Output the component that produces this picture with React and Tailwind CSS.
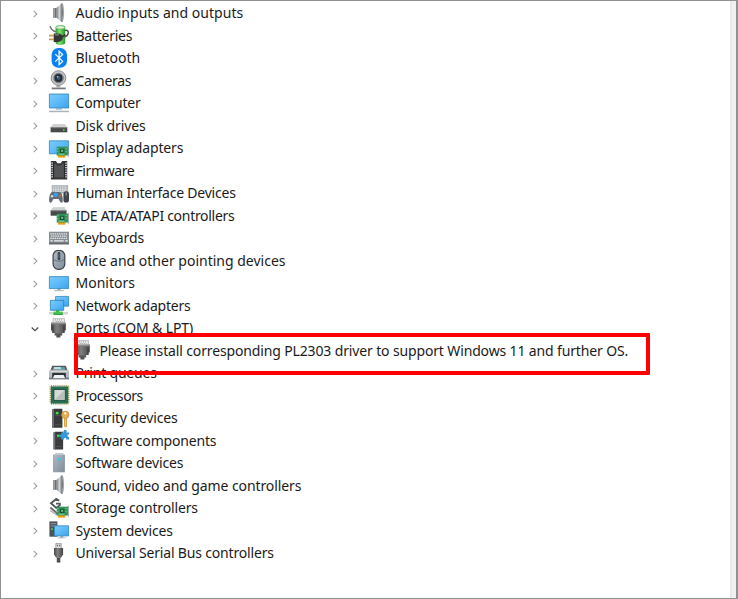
import React from "react";

const Defs = () => (
  <svg className="absolute h-0 w-0" aria-hidden="true">
    <defs>
      <linearGradient id="screen" x1="0" y1="0" x2="1" y2="1">
        <stop offset="0" stopColor="#7ccbfb" />
        <stop offset="0.5" stopColor="#5dbaf8" />
        <stop offset="1" stopColor="#3aa3ee" />
      </linearGradient>
      <linearGradient id="metal" x1="0" y1="0" x2="1" y2="0">
        <stop offset="0" stopColor="#6d7174" />
        <stop offset="0.55" stopColor="#d5d8da" />
        <stop offset="1" stopColor="#85898c" />
      </linearGradient>
      <linearGradient id="dark" x1="0" y1="0" x2="1" y2="0">
        <stop offset="0" stopColor="#4a4a4a" />
        <stop offset="0.4" stopColor="#808080" />
        <stop offset="1" stopColor="#444" />
      </linearGradient>
      <linearGradient id="steel" x1="0" y1="0" x2="1" y2="1">
        <stop offset="0" stopColor="#b3bdc6" />
        <stop offset="1" stopColor="#7f8c99" />
      </linearGradient>
      <linearGradient id="grass" x1="0" y1="0" x2="1" y2="0">
        <stop offset="0" stopColor="#2b9b34" />
        <stop offset="0.4" stopColor="#86e36f" />
        <stop offset="1" stopColor="#27922f" />
      </linearGradient>
    </defs>
  </svg>
);

const Card = () => (
  <g>
    <path d="M10 17h7.5v2.6H10z" fill="#f5a81c" />
    <path d="M11.8 17v2.6M13.7 17v2.6M15.6 17v2.6" stroke="#d9860c" strokeWidth=".5" />
    <path d="M8.7 8.7h11.3v8.8H8.7z" fill="#2f9457" />
    <path d="M12 10.8h4.4v4.2H12z" fill="#155331" />
    <path d="M13 11.8h2.2v2H13z" fill="#6fb98b" />
    <path d="M9.8 10v1.3M9.8 13v1.3M18 10v1.2M18 13v1.2M10.5 16.2h6" stroke="#a8dfb4" strokeWidth=".8" />
    <path d="M20.3 7.8v11" stroke="#8b9690" strokeWidth=".9" />
  </g>
);

const Speaker = () => (
  <g>
    <path d="M5.3 5h3v9.8h-3z" fill="#6b6f72" />
    <path d="M6 5h1v9.8H6z" fill="#9da1a4" />
    <path d="M8.3 5 13.8.2v18.9L8.3 14.8z" fill="url(#metal)" />
    <path d="M13.8.2c1.7.2 2.3 4.2 2.3 9.4s-.7 9.3-2.3 9.5z" fill="#a8adb0" />
    <path d="M13.8.2v18.9" stroke="#6c7073" strokeWidth=".8" />
    <path d="M14.2 5.5c1.2 1 1.2 7 0 8.2z" fill="#686c6f" />
  </g>
);

const Battery = () => (
  <g>
    <path d="M2 1.2C3.2 4 4.6 6.5 8 6.6" fill="none" stroke="#74786f" strokeWidth="1.6" />
    <path d="M17 5.5c2.5-.7 4 .8 3 3.4-.8 2-2.2 3-4.6 3.3" fill="none" stroke="#4d504d" strokeWidth="1.5" />
    <path d="M7.6 2.2C7.6 1 9.8.3 12.4.3s4.8.7 4.8 1.9v15.5c0 1.3-2.2 2.2-4.8 2.2s-4.8-.9-4.8-2.2z" fill="url(#grass)" />
    <ellipse cx="12.4" cy="2.4" rx="4.4" ry="1.7" fill="#dff3da" stroke="#57a855" strokeWidth=".6" />
    <path d="M5.7 8.4h4.5c2.8 0 4.6 1.7 4.6 4.2s-1.8 4.3-4.6 4.3H5.7z" fill="#343633" />
    <path d="M1 9.7h5v1.7H1zM1 13.6h5v1.7H1z" fill="#c69b55" />
    <path d="M7 9.8h4" stroke="#8b8e89" strokeWidth="1.1" />
    <path d="m14 12 3.3-2.4" stroke="#393b39" strokeWidth="2" />
  </g>
);

const Bluetooth = () => (
  <g>
    <rect x="3.6" y="0" width="15.4" height="19.7" rx="6.8" fill="#0981f4" />
    <path d="m7.3 6.1 7.3 7.3-3.5 3.2V3.2l3.5 3.2-7.3 7.2" fill="none" stroke="#fff" strokeWidth="1.25" />
  </g>
);

const Camera = () => (
  <g>
    <path d="M8.4 15h3.8v3H8.4z" fill="#aaa" />
    <path d="M3.7 17.5h14v1.8h-14z" fill="#777a7c" />
    <path d="M5 17.4h11v.6H5z" fill="#c8cacb" />
    <circle cx="10.5" cy="8" r="7.3" fill="#c4c5c6" stroke="#8b8d8f" strokeWidth="1" />
    <circle cx="10.5" cy="8" r="5.3" fill="#7b7f84" />
    <circle cx="10.5" cy="8" r="3.9" fill="#252d38" />
    <circle cx="10.5" cy="8" r="1.8" fill="#3c5d82" />
    <circle cx="9.6" cy="6.7" r=".8" fill="#bcd6ee" />
  </g>
);

const Computer = () => (
  <g>
    <path d="M8.4 15h5.2l.8 2H7.6z" fill="#c6cdd2" />
    <path d="M1.4 1h19.2v14H1.4z" fill="url(#screen)" stroke="#3287bd" strokeWidth=".8" />
    <path d="M1 17.7h20v1.5H1z" fill="#a8b5bd" />
  </g>
);

const Disk = () => (
  <g>
    <path d="m5 9 12-.1 2.3 3.6H2.6z" fill="#d0d1d2" />
    <path d="M2.6 12.4h16.7v4.9H2.6z" fill="#47494b" />
    <path d="M2.6 12.3h16.7v.9H2.6z" fill="#818385" />
    <circle cx="15.8" cy="15" r=".9" fill="#39dd3d" />
  </g>
);

const Display = () => (
  <g>
    <path d="M1.4 2.8h19.2v13H1.4z" fill="url(#screen)" stroke="#3287bd" strokeWidth=".8" />
    <Card />
  </g>
);

const Firmware = () => (
  <g>
    <path d="M2.9 1.1H8l1.4 2.2h3.4l1.4-2.2h5v18.5H2.9z" fill="#373839" />
    <path d="M6.2 3.8h1.6l1.5 1.8h3.5l1.6-1.8h1.5v13.4H6.2z" fill="#525354" />
    <path d="M4.1 2.5v16M18 2.5v16" stroke="#e7e7e7" strokeWidth="1.5" strokeDasharray="1.2 1.1" />
    <path d="M5.5 2v17M16.6 2v17" stroke="#202122" strokeWidth=".7" />
  </g>
);

const Hid = () => (
  <g>
    <path d="M3.7 2.2h16.4v8.2H3.7z" fill="#a7adb3" />
    <path d="M4.8 4h14.4M4.8 6.1h14.4M4.8 8.2h14.4" stroke="#f2f4f5" strokeWidth="1.2" strokeDasharray="1.5 .8" />
    <path d="M3.3 9.4c1.5-1 3-.3 4.9-.3s3.1-.7 4.7.4c1.4 1.3 2.2 6.1 1.8 9-.2 1.5-1.8 1.7-2.6.3l-1.5-2.9H5.4l-1.6 3c-.9 1.3-2.4.9-2.6-.6-.4-3 .6-7.7 2.1-8.9z" fill="#666c74" />
    <circle cx="7.7" cy="11.8" r="2.2" fill="#3b9fe8" />
    <circle cx="4" cy="13.2" r="1.2" fill="#d8dce0" />
    <circle cx="12" cy="12.8" r="1" fill="#e36b35" />
    <rect x="15.4" y="8.3" width="5.6" height="11.2" rx="2.6" fill="#3e454c" />
    <path d="M18.2 9.4v3.2" stroke="#a7b1b8" strokeWidth=".9" />
  </g>
);

const Ide = () => (
  <g>
    <path d="m5 2.2 11.5-.1 2 3.5H2.6z" fill="#d0d1d2" />
    <path d="M2.6 5.5h15.9v5.2H2.6z" fill="#47494b" />
    <path d="M2.6 5.4h15.9v.9H2.6z" fill="#818385" />
    <Card />
  </g>
);

const Keyboard = () => (
  <g>
    <path d="M1 3.7h20v12.5H1z" fill="#858c92" />
    <path d="M1 14.6h20v1.8H1z" fill="#656b70" />
    <path d="M2.3 5.9h17.4M2.3 10.4h17.4" stroke="#edf0f1" strokeWidth="1.3" strokeDasharray="1.4 .8" />
    <path d="M3 8.1h16" stroke="#edf0f1" strokeWidth="1.3" strokeDasharray="1.4 .8" />
    <path d="M2.3 12.8h2.4M6 12.8h9.7M17.2 12.8h2.5" stroke="#edf0f1" strokeWidth="1.3" />
  </g>
);

const Mouse = () => (
  <g>
    <rect x="5.1" y=".4" width="11.7" height="19" rx="5.3" fill="url(#steel)" stroke="#3c424b" strokeWidth="1.2" />
    <path d="M6 9.8c2.6 1.8 7.3 1.8 9.9 0" fill="none" stroke="#5b6775" strokeWidth=".8" />
    <rect x="9.7" y="2" width="2.5" height="8" rx="1.2" fill="#343a43" />
    <path d="M10.9 3.4v4.5" stroke="#7f8b98" strokeWidth=".7" />
  </g>
);

const Monitor = () => (
  <g>
    <path d="M9.4 15h3.2v2.3H9.4z" fill="#a5adb2" />
    <path d="M6.2 17.2h9.6v1H6.2z" fill="#a8b2b8" />
    <path d="M1.4 3.6h19.2v12H1.4z" fill="url(#screen)" stroke="#3287bd" strokeWidth=".8" />
  </g>
);

const Network = () => (
  <g>
    <path d="M7.6 1.4h13v9.8h-13z" fill="url(#screen)" stroke="#3287bd" strokeWidth=".8" />
    <path d="M2.4 5.3h13.3v10H2.4z" fill="url(#screen)" stroke="#2d7cb0" strokeWidth=".8" />
    <path d="M1 17h19v2.4H1z" fill="#d1d4d4" />
    <path d="M8 15.2h3.2v2H8z" fill="#35ae43" />
    <path d="M5.4 16.6h9.4v3.2H5.4z" fill="#4cc657" />
    <path d="M5.4 18.7h9.4v1.1H5.4z" fill="#279e34" />
  </g>
);

const Port = () => (
  <g>
    <path d="M5 .3h11.4v5H5z" fill="#e8e8e8" stroke="#a8a8a8" strokeWidth=".7" />
    <path d="M7 1.9h8M7.8 3.5h6.6" stroke="#8a8a8a" strokeWidth=".8" strokeDasharray="1 1" />
    <path d="M3 4.7h14.8v7.8h-1.2v2.6H4.2v-2.6H3z" fill="url(#dark)" />
    <path d="M3 4.7h14.8v1.5H3z" fill="#8a8a8a" />
    <path d="M4.9 8v6.5M15.9 8v6.5" stroke="#3a3a3a" strokeWidth=".9" />
    <path d="M6.6 15h7.6v2.4H6.6zM8.4 17.4h4v2.1h-4z" fill="#505050" />
    <path d="M7 15.8h6.8" stroke="#8a8a8a" strokeWidth=".5" />
  </g>
);

const Printer = () => (
  <g>
    <path d="M4.2 2.7h13.6l1.8 5H2.4z" fill="#55595d" />
    <path d="M6 4h10l.8 2.4H5.2z" fill="#b8dce4" />
    <path d="M12.7 4H16l.8 2.4h-3.5z" fill="#3fa99d" />
    <path d="M1 8.2 2.5 6.8h17L21 8.2v7.9H1z" fill="#b6babd" />
    <path d="M1 14.5h20v1.9H1z" fill="#777b7f" />
    <path d="M4.2 9.8h13.6v5.4H4.2z" fill="#30343a" />
    <path d="m6.4 12 9.2-.1 1.6 3.3H4.8z" fill="#f0f3f5" />
    <path d="M2.5 8.7h17" stroke="#e7e9ea" strokeWidth=".8" />
  </g>
);

const Processor = () => (
  <g>
    <path d="M3 .8h17.3M3 19h17.3M2.3 1.5v17M20.7 1.5v17" fill="none" stroke="#b99b4b" strokeWidth="1.5" strokeDasharray="1.1 1" />
    <path d="M2.8 1.4h17.5v17.2H2.8z" fill="#286e52" />
    <path d="M5.9 4.5h11.2v10.9H5.9z" fill="#d5d9d7" stroke="#174c37" strokeWidth=".9" />
    <path d="M6.4 14.9 16.6 5v9.9z" fill="#b9c0bc" />
  </g>
);

const Tower = () => (
  <g>
    <path d="M4.2 1.5 6 .8h8.4v19H4.2z" fill="#393b3d" />
    <path d="M4.2 1.5 6 .8V20l-1.8-.7z" fill="#707375" />
    <path d="M7.2 7.6h5.7M7.2 16.8h5.7" stroke="#5d6062" strokeWidth=".7" />
    <path d="M7.8 3.9h2.8v2.4H7.8z" fill="#3ce345" />
  </g>
);

const Security = () => (
  <g>
    <Tower />
    <path d="M16 8.8h3v9.7l-1.5 1.2-1.5-1.4z" fill="#dca044" />
    <circle cx="17.3" cy="6.8" r="3.7" fill="#e6ae55" stroke="#c1873a" strokeWidth=".7" />
    <circle cx="17.3" cy="5.4" r="1.1" fill="#fff" />
    <path d="M17.5 10.5v8" stroke="#f6d58e" strokeWidth=".7" />
  </g>
);

const Component = () => (
  <g>
    <g transform="translate(1.6 1) scale(.94 .93)">
      <Tower />
    </g>
    <path d="M13.2 2.4h2.4c-.5-1.6.2-2.5 1.5-2.5s2 .9 1.4 2.5H21v2.2h-1.3v2.2H21v2.7h-2.9V8h-2v1.5h-2.9V6.9c-1.3.4-1.9-.2-1.9-1.2s.7-1.5 1.9-1z" fill="#3797d8" />
  </g>
);

const SoftwareDevice = () => (
  <g>
    <path d="M5.2 2 8 .2h6.8l2 1.8v17.3H5.2z" fill="url(#steel)" />
    <path d="M5.2 2 8 .2h6.8l2 1.8z" fill="#c2cad0" />
    <path d="M5.6 2v17.1M16.4 2v17.1" stroke="#8d99a3" strokeWidth=".7" />
    <path d="M9.9 5h2.6v2.4H9.9z" fill="#38c4ec" />
  </g>
);

const Storage = () => (
  <g>
    <path d="M11.2 2.8 8.2.9 3 5.3l5.2 4.6 3.6-2.6V5.6H8" fill="none" stroke="#545759" strokeWidth="1.9" />
    <path d="m2.4 9.6 7 6" stroke="#696c6e" strokeWidth="2" />
    <path d="m2.2 12.4 6.7 4.6" stroke="#a5a8aa" strokeWidth="1.2" />
    <Card />
  </g>
);

const System = () => (
  <g>
    <path d="M1.4 1.4h8v15.3h-8z" fill="#4b5258" />
    <path d="M2.6 3.7h5.8M2.6 6h5.8" stroke="#9ba4aa" strokeWidth=".9" />
    <path d="M3 8.3h1.8v1.6H3z" fill="#36d447" />
    <path d="M12.3 16h3v1.7h-3zM9.5 17.4h8.6v.9H9.5z" fill="#a8b4bc" />
    <path d="M6.5 5.8h14.1v10.1H6.5z" fill="url(#screen)" stroke="#3287bd" strokeWidth=".8" />
  </g>
);

const Usb = () => (
  <g>
    <path d="M7.9.3h5.3v5.3H7.9z" fill="#dedede" stroke="#8e8e8e" strokeWidth=".8" />
    <path d="M9.1 1.8h1v1.5h-1zM11.2 1.8h1v1.5h-1z" fill="#555" />
    <path d="M6 4.9h9.1v6.5l-2.1 3.4H8.1L6 11.4z" fill="url(#dark)" />
    <path d="M8.8 14.8h3.5v4.7H8.8z" fill="#3f3f3f" />
    <path d="M9 16.2h3M9 17.7h3" stroke="#777" strokeWidth=".5" />
  </g>
);

const devices = [
  ["Audio inputs and outputs", Speaker, "tracking-[0.04px]"],
  ["Batteries", Battery, "tracking-[-0.25px]"],
  ["Bluetooth", Bluetooth, "tracking-[-0.05px]"],
  ["Cameras", Camera, "tracking-[-0.3px]"],
  ["Computer", Computer, "tracking-[-0.15px]"],
  ["Disk drives", Disk, "tracking-[-0.12px]"],
  ["Display adapters", Display, "tracking-[-0.12px]"],
  ["Firmware", Firmware, "tracking-[-0.4px]"],
  ["Human Interface Devices", Hid, "tracking-[-0.22px]"],
  ["IDE ATA/ATAPI controllers", Ide, "tracking-[-0.3px]"],
  ["Keyboards", Keyboard, "tracking-[-0.05px]"],
  ["Mice and other pointing devices", Mouse, "tracking-normal"],
  ["Monitors", Monitor, "tracking-normal"],
  ["Network adapters", Network, "tracking-[-0.2px]"],
  ["Ports (COM & LPT)", Port, "tracking-[-0.14px]", "open"],
  ["Please install corresponding PL2303 driver to support Windows 11 and further OS.", Port, "tracking-[-0.14px]", "child"],
  ["Print queues", Printer, "tracking-[-0.2px]"],
  ["Processors", Processor, "tracking-[-0.4px]"],
  ["Security devices", Security, "tracking-[-0.15px]"],
  ["Software components", Component, "tracking-[-0.18px]"],
  ["Software devices", SoftwareDevice, "tracking-[-0.15px]"],
  ["Sound, video and game controllers", Speaker, "tracking-[-0.1px]"],
  ["Storage controllers", Storage, "tracking-[-0.15px]"],
  ["System devices", System, "tracking-[-0.15px]"],
  ["Universal Serial Bus controllers", Usb, "tracking-[-0.17px]"],
];

function Chevron({ state }) {
  return (
    <svg viewBox="0 0 10 10" className="mr-2 h-2.5 w-2.5 shrink-0" fill="none">
      {state === "open" ? (
        <path d="m1.7 3.5 3.3 3.2 3.3-3.2" stroke="#4a4a4a" strokeWidth="1.2" />
      ) : (
        <path d="m3.7 1.8 3.2 3.2-3.2 3.2" stroke="#a0a0a0" strokeWidth="1.1" />
      )}
    </svg>
  );
}

function Row({ label, Icon, tracking, state }) {
  return (
    <li className={state === "child" ? "flex h-[22.5px] items-center pl-[71px]" : "flex h-[22.5px] items-center pl-[29px]"}>
      {state !== "child" && <Chevron state={state} />}
      <svg viewBox="0 0 22 22" className="mr-[5.5px] h-[22px] w-[22px] shrink-0">
        <Icon />
      </svg>
      <span className={`whitespace-nowrap pb-[0.5px] ${tracking}`}>{label}</span>
    </li>
  );
}

export default function App() {
  return (
    <main className="relative flex h-[599px] w-[738px] overflow-hidden border border-r-2 border-[#919191] bg-white font-['Noto_Sans','Open_Sans',sans-serif] text-[14px] leading-[22px] text-[#1b1b1b]">
      <Defs />
      <ul className="flex-1 pt-[1.25px]">
        {devices.map(([label, Icon, tracking, state]) => (
          <Row key={label} label={label} Icon={Icon} tracking={tracking} state={state} />
        ))}
      </ul>
      <div className="w-[6px] border-l-2 border-[#e9e9e9] bg-[#f1f1f1]" />
      <div className="absolute left-[73px] top-[332px] h-[42px] w-[576px] rounded-[1px] border-4 border-[#fe0000]" />
    </main>
  );
}
